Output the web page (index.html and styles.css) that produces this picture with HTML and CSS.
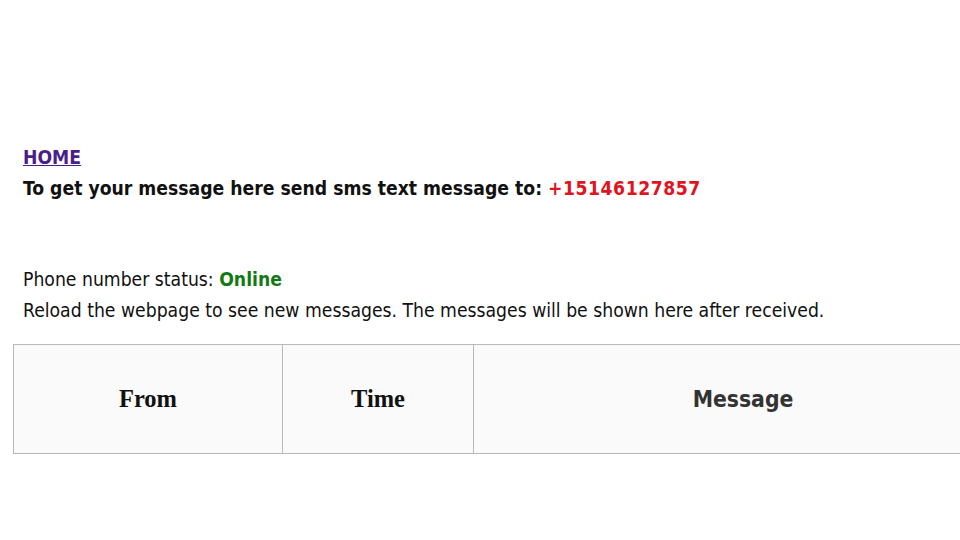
FILE: index.html
```html
<!DOCTYPE html>
<html>
<head>
<meta charset="utf-8">
<link rel="stylesheet" href="styles.css">
</head>
<body>
<div class="page">
  <div class="intro">
    <a class="home" href="#">HOME</a>
    <p class="send">To get your message here send sms text message to: <span class="phone">+15146127857</span></p>
  </div>
  <div class="status">
    <p>Phone number status: <span class="online">Online</span></p>
    <p>Reload the webpage to see new messages. The messages will be shown here after received.</p>
  </div>
  <table class="msgs">
    <tr>
      <th class="c-from">From</th>
      <th class="c-time">Time</th>
      <th class="c-msg">Message</th>
    </tr>
  </table>
</div>
</body>
</html>
```
FILE: styles.css
```css
html, body { margin: 0; padding: 0; background: #fff; overflow: hidden; }
.page {
  width: 960px; height: 540px; overflow: hidden;
  font-family: "DejaVu Sans", Verdana, sans-serif;
  font-stretch: semi-condensed;
  font-size: 19.2px; color: #111;
  padding-top: 142px; box-sizing: border-box;
}
.intro { padding-left: 23px; line-height: 31px; }
.home { color: #4b1f8a; font-weight: bold; text-decoration: underline; }
.send { margin: 0; font-weight: bold; }
.phone { color: #e0141e; letter-spacing: 0.5px; }
.status { padding-left: 23px; line-height: 31px; margin-top: 60px; }
.status p { margin: 0; }
.online { color: #137a13; font-weight: bold; }
.msgs {
  margin-top: 18px; margin-left: 13px;
  border-collapse: collapse; width: 1000px;
  background: #fafafa;
}
.msgs th { border: 1px solid #b8b8b8; height: 108px; padding: 0; }
.c-from, .c-time { font-family: "Liberation Serif", "Times New Roman", serif; font-size: 24.5px; color: #111; }
.c-from { width: 268px; }
.c-time { width: 190px; }
.c-msg { font-family: "DejaVu Sans", sans-serif; font-stretch: semi-condensed; font-size: 22.7px; color: #333; padding-top: 7px; }
```
